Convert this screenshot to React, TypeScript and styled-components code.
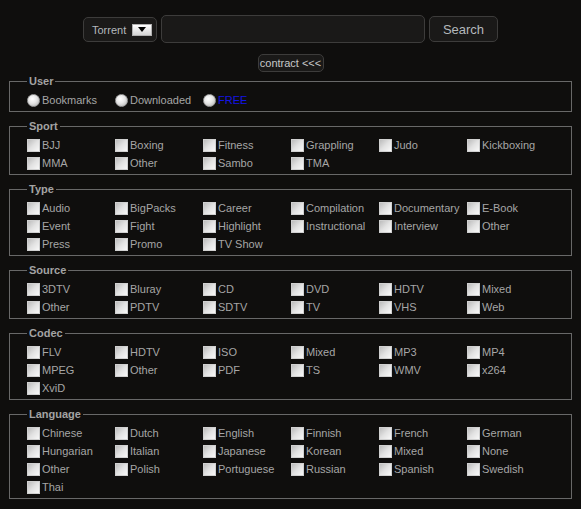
import React from 'react'
import styled, { createGlobalStyle } from 'styled-components'

const GlobalStyle = createGlobalStyle`
  html, body {
    margin: 0;
    padding: 0;
    background: #0f0e0d;
  }
  body {
    font-family: "Liberation Sans", Arial, sans-serif;
    font-size: 11px;
    color: #a6a6a6;
  }
`

const Page = styled.div`
  padding: 15px 9px 0;
  display: flex;
  flex-direction: column;
  align-items: stretch;
`

const SearchBar = styled.div`
  display: flex;
  justify-content: center;
  align-items: center;
  gap: 4px;
  height: 28px;
`

const SelectBox = styled.div`
  display: flex;
  align-items: center;
  justify-content: space-between;
  box-sizing: border-box;
  width: 74px;
  height: 25px;
  margin-top: 1px;
  padding: 0 4px 0 8px;
  border: 1px solid #3d3c3b;
  border-radius: 5px;
  background: #1a1918;
  color: #b4b8bc;
  font-size: 11px;
`

const ArrowBox = styled.span`
  display: flex;
  align-items: center;
  justify-content: center;
  box-sizing: border-box;
  width: 20px;
  height: 12px;
  border: 1px solid #b0b0b0;
  background: linear-gradient(#ffffff, #d4d4d4);
`

const Arrow = styled.span`
  width: 0;
  height: 0;
  border-left: 4px solid transparent;
  border-right: 4px solid transparent;
  border-top: 5px solid #000;
`

const TextInput = styled.input`
  box-sizing: border-box;
  width: 264px;
  height: 28px;
  border: 1px solid #3d3c3b;
  border-radius: 5px;
  background: #1a1918;
  color: #ccc;
  outline: none;
`

const Button = styled.button<{ small?: boolean }>`
  box-sizing: border-box;
  width: ${p => (p.small ? '66px' : '69px')};
  height: ${p => (p.small ? '18px' : '26px')};
  padding: 0;
  border: 1px solid #3d3c3b;
  border-radius: 5px;
  background: #1a1918;
  color: ${p => (p.small ? '#c8c8c8' : '#b4b8bc')};
  font-family: "Liberation Sans", Arial, sans-serif;
  font-size: ${p => (p.small ? '11px' : '13px')};
  line-height: 1;
`

const ContractRow = styled.div`
  display: flex;
  justify-content: center;
  margin: 11px 0 2px;
`

const Fieldset = styled.fieldset`
  margin: 0 0 7px;
  padding: 3px 0 2px 17px;
  border: 1px solid #686868;
  min-width: 0;
`

const Legend = styled.legend`
  padding: 0 2px;
  margin-left: 0;
  font-weight: bold;
  font-size: 11px;
  line-height: 14px;
  color: #a3a3a3;
`

const Grid = styled.div`
  display: grid;
  grid-template-columns: repeat(6, 88px);
  grid-auto-rows: 18px;
`

const Item = styled.label`
  display: flex;
  align-items: center;
  gap: 2px;
  white-space: nowrap;
  color: #a6a6a6;
`

const Check = styled.input`
  appearance: none;
  margin: 0;
  box-sizing: border-box;
  width: 13px;
  height: 13px;
  border: 1px solid #d0d0d0;
  background: linear-gradient(135deg, #bcbcbc 0%, #e2e2e2 50%, #f8f8f8 100%);
  flex: none;
`

const Radio = styled.input`
  appearance: none;
  margin: 0;
  box-sizing: border-box;
  width: 13px;
  height: 13px;
  border-radius: 50%;
  border: 1px solid #a0a0a0;
  background: radial-gradient(circle at 40% 35%, #ffffff 0%, #e6e6e6 45%, #ababab 100%);
  flex: none;
`

const RadioText = styled.span<{ accent?: boolean }>`
  color: ${p => (p.accent ? '#1414e6' : '#a6a6a6')};
`

const groups: { title: string; items: string[] }[] = [
  { title: 'Sport', items: ['BJJ', 'Boxing', 'Fitness', 'Grappling', 'Judo', 'Kickboxing', 'MMA', 'Other', 'Sambo', 'TMA'] },
  {
    title: 'Type',
    items: ['Audio', 'BigPacks', 'Career', 'Compilation', 'Documentary', 'E-Book', 'Event', 'Fight', 'Highlight', 'Instructional', 'Interview', 'Other', 'Press', 'Promo', 'TV Show'],
  },
  { title: 'Source', items: ['3DTV', 'Bluray', 'CD', 'DVD', 'HDTV', 'Mixed', 'Other', 'PDTV', 'SDTV', 'TV', 'VHS', 'Web'] },
  { title: 'Codec', items: ['FLV', 'HDTV', 'ISO', 'Mixed', 'MP3', 'MP4', 'MPEG', 'Other', 'PDF', 'TS', 'WMV', 'x264', 'XviD'] },
  {
    title: 'Language',
    items: ['Chinese', 'Dutch', 'English', 'Finnish', 'French', 'German', 'Hungarian', 'Italian', 'Japanese', 'Korean', 'Mixed', 'None', 'Other', 'Polish', 'Portuguese', 'Russian', 'Spanish', 'Swedish', 'Thai'],
  },
]

const App: React.FC = () => {
  return (
    <>
      <GlobalStyle />
      <Page>
        <SearchBar>
          <SelectBox>
            Torrent
            <ArrowBox>
              <Arrow />
            </ArrowBox>
          </SelectBox>
          <TextInput type="text" />
          <Button>Search</Button>
        </SearchBar>

        <ContractRow>
          <Button small>contract &lt;&lt;&lt;</Button>
        </ContractRow>

        <Fieldset>
          <Legend>User</Legend>
          <Grid>
            <Item>
              <Radio type="radio" name="user" />
              <RadioText>Bookmarks</RadioText>
            </Item>
            <Item>
              <Radio type="radio" name="user" />
              <RadioText>Downloaded</RadioText>
            </Item>
            <Item>
              <Radio type="radio" name="user" />
              <RadioText accent>FREE</RadioText>
            </Item>
          </Grid>
        </Fieldset>

        {groups.map(g => (
          <Fieldset key={g.title}>
            <Legend>{g.title}</Legend>
            <Grid>
              {g.items.map((name, i) => (
                <Item key={g.title + i}>
                  <Check type="checkbox" />
                  {name}
                </Item>
              ))}
            </Grid>
          </Fieldset>
        ))}
      </Page>
    </>
  )
}

export default App
